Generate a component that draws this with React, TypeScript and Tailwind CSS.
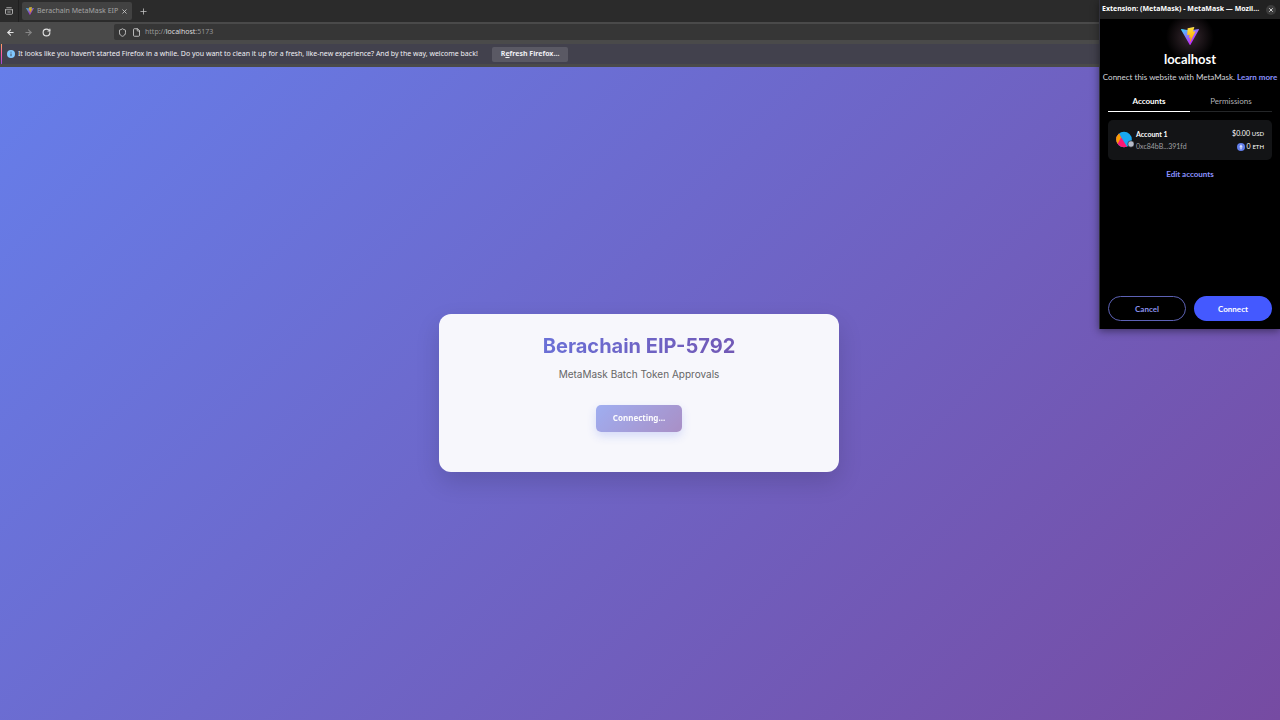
import { useId } from "react";
import { ArrowLeft, ArrowRight, File, Plus, RotateCw, Shield, X } from "lucide-react";

function ViteLogo({ className }: { className: string }) {
  const id = useId();
  return (
    <svg viewBox="0 0 256 257" className={className} aria-hidden="true">
      <defs>
        <linearGradient id={`${id}-v`} x1="-0.8%" x2="57.6%" y1="7.7%" y2="78.4%">
          <stop offset="0%" stopColor="#41D1FF" />
          <stop offset="100%" stopColor="#BD34FE" />
        </linearGradient>
        <linearGradient id={`${id}-b`} x1="43.4%" x2="50.3%" y1="2.2%" y2="89%">
          <stop offset="0%" stopColor="#FFEA83" />
          <stop offset="8%" stopColor="#FFDD35" />
          <stop offset="100%" stopColor="#FFA800" />
        </linearGradient>
      </defs>
      <path
        fill={`url(#${id}-v)`}
        d="M255.153 37.938L134.897 252.976c-2.483 4.44-8.862 4.466-11.382.048L.875 37.958c-2.746-4.814 1.371-10.646 6.827-9.67l120.385 21.517a6.537 6.537 0 0 0 2.322-.004l117.867-21.483c5.438-.991 9.574 4.796 6.877 9.62Z"
      />
      <path
        fill={`url(#${id}-b)`}
        d="M185.432.063L96.44 17.501a3.268 3.268 0 0 0-2.634 3.014l-5.474 92.456a3.268 3.268 0 0 0 3.997 3.378l24.777-5.718c2.318-.535 4.413 1.507 3.936 3.838l-7.361 36.047c-.495 2.426 1.782 4.5 4.151 3.78l15.304-4.649c2.372-.72 4.652 1.36 4.15 3.788l-11.698 56.621c-.732 3.542 3.979 5.473 5.943 2.437l1.313-2.028l72.516-144.72c1.215-2.423-.88-5.186-3.54-4.672l-25.505 4.922c-2.396.462-4.435-1.77-3.759-4.114l16.646-57.705c.677-2.35-1.37-4.583-3.769-4.113Z"
      />
    </svg>
  );
}

function TabBar() {
  return (
    <div className="flex h-[22px] items-center bg-[#2b2b2b] text-[#c8c8c8]">
      <button aria-label="Firefox View" className="flex h-full w-[19px] items-center justify-center border-r border-[#202020]">
        <svg viewBox="0 0 16 16" className="size-2" fill="none" stroke="currentColor" strokeWidth="1.6" strokeLinecap="round" strokeLinejoin="round" aria-hidden="true">
          <path d="M3.500 1.500h9M1 5.500h14M1 5.500v7a2 2 0 0 0 2 2h10a2 2 0 0 0 2-2v-7M5.500 10h5" />
        </svg>
      </button>
      <div className="ml-[3px] flex h-[18px] w-[110px] items-center rounded-[2px] bg-[#424242] px-1">
        <ViteLogo className="size-2 shrink-0 opacity-75" />
        <span className="ml-[3px] flex-1 overflow-hidden text-[7px] whitespace-nowrap text-[#a4a4a4]">Berachain MetaMask EIP</span>
        <button aria-label="Close tab" className="ml-[2px]">
          <X className="size-[7px]" strokeWidth={3} />
        </button>
      </div>
      <button aria-label="New tab" className="ml-[7px]">
        <Plus className="size-[9px]" strokeWidth={2} />
      </button>
    </div>
  );
}

function NavBar() {
  return (
    <div className="flex h-5 items-center bg-[#4a4a4a] pl-[6px] text-[#e4e4e4]">
      <button aria-label="Back">
        <ArrowLeft className="size-[9px]" strokeWidth={3} />
      </button>
      <button aria-label="Forward" disabled className="ml-[9px] text-[#868686]">
        <ArrowRight className="size-[9px]" strokeWidth={3} />
      </button>
      <button aria-label="Reload" className="ml-[9px]">
        <RotateCw className="size-[9px]" strokeWidth={3} />
      </button>
      <div className="mr-[114px] ml-[63px] flex h-4 flex-1 items-center rounded-[2px] bg-[#363636] pl-1">
        <Shield className="size-[9px] shrink-0" strokeWidth={2} />
        <File className="ml-[5px] size-[9px] shrink-0" strokeWidth={2} />
        <a href="http://localhost:5173" className="ml-1 text-[7px] text-[#969696]">
          http://<span className="text-[#dedede]">localhost</span>:5173
        </a>
      </div>
    </div>
  );
}

function Notification() {
  return (
    <div className="bg-[#4a4a4a] pt-[2px] pb-[3px] text-[#f0f0f4]">
      <div className="flex h-5 items-center bg-[#42414d]">
        <span className="ml-px h-5 w-px bg-linear-to-b from-[#ffa05a] via-[#ff55a0] to-[#9c45d8]" />
        <svg viewBox="0 0 16 16" className="ml-[5px] size-2" aria-hidden="true">
          <circle cx="8" cy="8" r="8" fill="#80c8ff" />
          <path d="M8 3.400v1.800M8 7v5.400" stroke="#42414d" strokeWidth="1.8" />
        </svg>
        <p className="ml-[3px] text-[7px] whitespace-nowrap">
          It looks like you haven’t started Firefox in a while. Do you want to clean it up for a fresh, like-new experience? And by the way, welcome back!
        </p>
        <button className="ml-[14px] h-[15px] rounded-[2px] bg-[#5a5964] px-[9px] text-[7px] font-bold whitespace-nowrap">
          R<span className="underline">e</span>fresh Firefox…
        </button>
      </div>
    </div>
  );
}

function Page() {
  return (
    <main className="flex flex-1 items-center justify-center bg-[linear-gradient(135deg,#667eea_0%,#764ba2_100%)] pr-[2px] pb-[2px]">
      <section className="flex w-[400px] flex-col items-center rounded-[12px] bg-[#f7f7fc] pt-[18px] pb-10 shadow-[0_10px_24px_rgba(0,0,0,0.14)]">
        <h1 className="w-full bg-[linear-gradient(135deg,#667eea_0%,#764ba2_100%)] bg-clip-text text-center font-[Inter,sans-serif] text-[20px] leading-7 font-bold text-transparent">
          Berachain EIP-5792
        </h1>
        <p className="mt-2 font-[Inter,sans-serif] text-[10px] leading-3 text-[#666666]">MetaMask Batch Token Approvals</p>
        <button
          disabled
          className="mt-[25px] h-[27px] rounded-[5px] bg-[linear-gradient(135deg,#667eea_0%,#764ba2_100%)] px-[17px] text-[8px] font-bold text-white opacity-60 shadow-[0_4px_10px_rgba(102,126,234,0.4)]"
        >
          Connecting...
        </button>
      </section>
    </main>
  );
}

function AccountAvatar() {
  return (
    <svg viewBox="0 0 18 18" className="size-[18px] shrink-0" aria-hidden="true">
      <defs>
        <clipPath id="avatar-clip">
          <circle cx="8" cy="8.500" r="7.800" />
        </clipPath>
      </defs>
      <g clipPath="url(#avatar-clip)">
        <path d="M0 0h18v18H0z" fill="#18a8f2" />
        <path d="M2.500 2l10 16H0V2z" fill="#fc1974" />
        <path d="M0 2h3L5 6.500 1.500 13H0z" fill="#f8a000" />
      </g>
      <circle cx="15" cy="13" r="3.200" fill="#b7bbc8" stroke="#131416" strokeWidth="0.6" />
    </svg>
  );
}

function WalletPopup() {
  return (
    <aside className="absolute top-0 right-0 flex h-[329px] w-[181px] flex-col border-l border-[#30303a] bg-black font-[Lato,sans-serif] text-white shadow-[0_2px_8px_rgba(0,0,0,0.45)]">
      <header className="flex h-[19px] shrink-0 items-center justify-between bg-[#222222] pr-1 pl-[2px] font-['Noto_Sans',sans-serif]">
        <h2 className="text-[7px] font-bold whitespace-nowrap">Extension: (MetaMask) - MetaMask — Mozil…</h2>
        <button aria-label="Close window" className="flex size-[10px] items-center justify-center rounded-full bg-[#3c3c3c]">
          <X className="size-[6px]" strokeWidth={3} />
        </button>
      </header>
      <div className="flex flex-col items-center bg-[radial-gradient(circle_at_50%_18px,#3a2a32_0,#000_24px)] pt-2">
        <ViteLogo className="size-[18px]" />
        <h3 className="mt-[6px] text-[13px] leading-4 font-bold">localhost</h3>
        <p className="mt-1 text-[8px] leading-3 whitespace-nowrap text-[#d5d5da]">
          Connect this website with MetaMask. <a href="#learn" className="font-bold text-[#8b92ff]">Learn more</a>
        </p>
      </div>
      <div role="tablist" className="mx-2 mt-2 grid h-[21px] shrink-0 grid-cols-2 text-[8px]">
        <button role="tab" aria-selected="true" className="border-b border-white font-bold">Accounts</button>
        <button role="tab" aria-selected="false" className="border-b border-[#242628] text-[#b0b0b5]">Permissions</button>
      </div>
      <div className="mx-2 mt-2 flex h-10 shrink-0 items-center rounded-[5px] bg-[#131416] px-2">
        <AccountAvatar />
        <div className="ml-[2px] flex-1 text-[7px] leading-3">
          <p className="font-bold">Account 1</p>
          <p className="text-[#a0a0a5]">0xc84bB...391fd</p>
        </div>
        <div className="flex flex-col items-end text-[7px] leading-3">
          <p>$0.00 <span className="text-[6px]">USD</span></p>
          <p className="flex items-center gap-[2px]">
            <svg viewBox="0 0 16 16" className="size-2" aria-hidden="true">
              <circle cx="8" cy="8" r="8" fill="#627eea" />
              <path d="M8 2.500l3.200 5.600L8 10 4.800 8.100zM8 13.500l3.200-4.400L8 11 4.800 9.100z" fill="#d8e0ff" />
            </svg>
            <span>0 <span className="text-[6px]">ETH</span></span>
          </p>
        </div>
      </div>
      <button className="mt-2 self-center text-[8px] leading-3 font-bold text-[#8b92ff]">Edit accounts</button>
      <footer className="mx-2 mt-auto mb-2 grid grid-cols-2 gap-2 text-[8px] font-bold">
        <button className="h-[25px] rounded-full border border-[#5d62b5] text-[#8b92ee]">Cancel</button>
        <button className="h-[25px] rounded-full bg-[#4459ff]">Connect</button>
      </footer>
    </aside>
  );
}

export default function App() {
  return (
    <div className="relative flex min-h-screen flex-col overflow-hidden font-['Noto_Sans',sans-serif]">
      <TabBar />
      <NavBar />
      <Notification />
      <Page />
      <WalletPopup />
    </div>
  );
}
